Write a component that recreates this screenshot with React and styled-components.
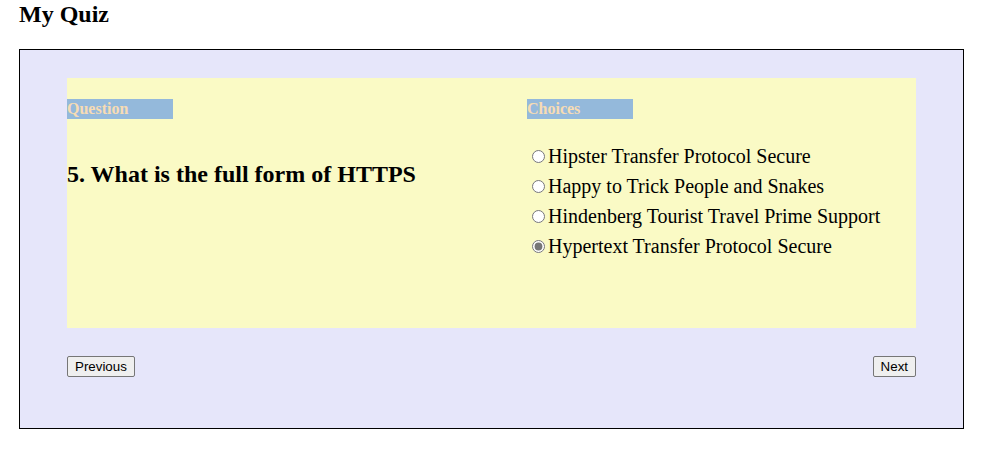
import styled, { createGlobalStyle } from 'styled-components';
import { useState } from 'react';

const GlobalStyle = createGlobalStyle`
	body {
		margin: 0;
		font-family: 'Liberation Serif', 'Times New Roman', serif;
		background: #fff;
	}
`;

const Page = styled.div`
	padding: 0 21px 0 19px;
`;

const Title = styled.h2`
	font-size: 24px;
	font-weight: bold;
	margin: 0 0 21px 0;
	line-height: 28px;
`;

const QuizBox = styled.div`
	border: 1px solid #000;
	background: #e6e6fa;
	padding: 28px 47px 51px;
`;

const Panel = styled.div`
	background: #fafac5;
	height: 250px;
	box-sizing: border-box;
	padding-top: 21px;
	display: flex;
`;

const Column = styled.div`
	width: ${(props) => props.width || 'auto'};
	flex: ${(props) => (props.width ? 'none' : '1')};
`;

const Label = styled.div`
	width: 106px;
	height: 20px;
	line-height: 20px;
	background: #94b9db;
	color: #f7dcb4;
	font-size: 16px;
	font-weight: bold;
`;

const QuestionText = styled.h2`
	font-size: 24px;
	font-weight: bold;
	margin: 41px 0 0 0;
	line-height: 28px;
`;

const Options = styled.div`
	margin-top: 22px;
`;

const Option = styled.label`
	display: flex;
	align-items: center;
	font-size: 20px;
	line-height: 30px;
	input {
		margin: 0 3px 0 5px;
		width: 13px;
		height: 13px;
		accent-color: #767676;
	}
`;

const ButtonRow = styled.div`
	display: flex;
	justify-content: space-between;
	margin-top: 28px;
`;

const NavButton = styled.button`
	font-family: 'Liberation Sans', Arial, sans-serif;
	font-size: 13.33px;
	padding: 1px 7px;
	height: 21px;
	line-height: 15px;
	background: #efefef;
	border: 1px solid #767676;
	border-radius: 2px;
	color: #000;
`;

const choices = [
	'Hipster Transfer Protocol Secure',
	'Happy to Trick People and Snakes',
	'Hindenberg Tourist Travel Prime Support',
	'Hypertext Transfer Protocol Secure',
];

function App() {
	const [picked, setPicked] = useState(3);

	return (
		<>
			<GlobalStyle />
			<Page>
				<Title>My Quiz</Title>
				<QuizBox>
					<Panel>
						<Column width="460px">
							<Label>Question</Label>
							<QuestionText>5. What is the full form of HTTPS</QuestionText>
						</Column>
						<Column>
							<Label>Choices</Label>
							<Options>
								{choices.map((c, i) => (
									<Option key={c}>
										<input
											type="radio"
											name="choice"
											checked={picked === i}
											onChange={() => setPicked(i)}
										/>
										{c}
									</Option>
								))}
							</Options>
						</Column>
					</Panel>
					<ButtonRow>
						<NavButton>Previous</NavButton>
						<NavButton>Next</NavButton>
					</ButtonRow>
				</QuizBox>
			</Page>
		</>
	);
}

export default App;
